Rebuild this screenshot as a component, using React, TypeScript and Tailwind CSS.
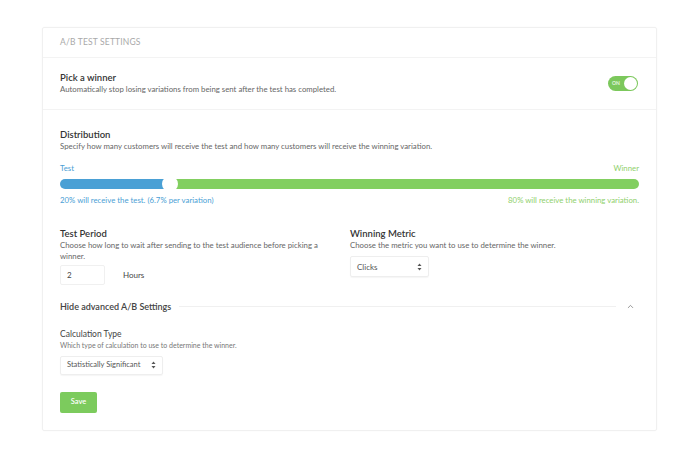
import { ChevronUp } from "lucide-react"

function SelectArrows() {
  return (
    <svg width="5" height="8" viewBox="0 0 5 8" className="text-[#555]">
      <path d="M2.5 0.5 L4.5 3 H0.5 Z" fill="currentColor" />
      <path d="M2.5 7.5 L4.5 5 H0.5 Z" fill="currentColor" />
    </svg>
  )
}

export default function App() {
  return (
    <div className="w-[700px] h-[460px] bg-white pt-[27px] pl-[42px] font-['Lato',sans-serif] text-[#333]">
      <div className="w-[615px] h-[404px] border border-[#f0f0f0] rounded-[2px] shadow-[0_0_2px_rgba(0,0,0,0.03)]">
        {/* header */}
        <div className="h-[30px] flex items-center px-[17px] border-b border-[#f3f3f3]">
          <span className="text-[8.5px] uppercase tracking-[0.02em] text-[#a9a9a9]">A/B Test Settings</span>
        </div>

        {/* pick a winner */}
        <div className="h-[52px] flex items-center justify-between px-[17px] border-b border-[#f3f3f3]">
          <div className="flex flex-col">
            <span className="text-[9.5px] font-semibold text-[#333] leading-[12px]">Pick a winner</span>
            <span className="text-[7.8px] text-[#666] leading-[11px]">
              Automatically stop losing variations from being sent after the test has completed.
            </span>
          </div>
          <div className="w-[30px] h-[15px] rounded-full bg-[#7cc85c] flex items-center justify-between pl-[4px] pr-[1px] mr-[1px]">
            <span className="text-[5px] text-white/80 font-bold">ON</span>
            <div className="w-[13px] h-[13px] rounded-full bg-white" />
          </div>
        </div>

        {/* distribution */}
        <div className="px-[17px] pt-[19px]">
          <div className="text-[9.5px] font-semibold leading-[12px]">Distribution</div>
          <div className="text-[7.8px] text-[#666] leading-[11px]">
            Specify how many customers will receive the test and how many customers will receive the winning variation.
          </div>
          <div className="flex justify-between mt-[11px] text-[7.8px] leading-[10px]">
            <span className="text-[#4aa0d5]">Test</span>
            <span className="text-[#8fd06c]">Winner</span>
          </div>
          <div className="relative mt-[6px] h-[10px] flex">
            <div className="w-[108px] h-full bg-[#4aa0d5] rounded-l-full" />
            <div className="flex-1 h-full bg-[#82cf60] rounded-r-full" />
            <div className="absolute left-[102px] top-[-3px] w-[16px] h-[16px] rounded-full bg-white" />
          </div>
          <div className="flex justify-between mt-[6px] text-[7.8px] leading-[10px]">
            <span className="text-[#4aa0d5]">20% will receive the test. (6.7% per variation)</span>
            <span className="text-[#8fd06c]">80% will receive the winning variation.</span>
          </div>
        </div>

        {/* test period / winning metric */}
        <div className="px-[17px] pt-[23px] grid grid-cols-[290px_1fr]">
          <div>
            <div className="text-[9.5px] font-semibold leading-[12px]">Test Period</div>
            <div className="text-[7.8px] text-[#666] leading-[11px] w-[268px]">
              Choose how long to wait after sending to the test audience before picking a winner.
            </div>
            <div className="flex items-center mt-[3px]">
              <div className="w-[45px] h-[20px] border border-[#f0f0f0] rounded-[2px] flex items-center px-[6px] text-[8px] text-[#444]">2</div>
              <span className="ml-[18px] text-[8px] text-[#444]">Hours</span>
            </div>
          </div>
          <div>
            <div className="text-[9.5px] font-semibold leading-[12px]">Winning Metric</div>
            <div className="text-[7.8px] text-[#666] leading-[11px]">
              Choose the metric you want to use to determine the winner.
            </div>
            <div className="mt-[5px] w-[79px] h-[21px] border border-[#eee] rounded-[2px] flex items-center justify-between px-[6px] shadow-[0_1px_1px_rgba(0,0,0,0.04)]">
              <span className="text-[8px] text-[#555]">Clicks</span>
              <SelectArrows />
            </div>
          </div>
        </div>

        {/* advanced toggle */}
        <div className="px-[17px] mt-[15px] flex items-center">
          <span className="text-[9px] font-semibold text-[#444]">Hide advanced A/B Settings</span>
          <div className="flex-1 h-px bg-[#f0f0f0] ml-[8px] mr-[10px]" />
          <ChevronUp className="w-[9px] h-[9px] text-[#777] mr-[4px]" strokeWidth={2} />
        </div>

        {/* calculation type */}
        <div className="px-[17px] pt-[15px]">
          <div className="text-[8.5px] text-[#444] leading-[11px]">Calculation Type</div>
          <div className="text-[7px] text-[#777] leading-[10px]">Which type of calculation to use to determine the winner.</div>
          <div className="mt-[6px] w-[103px] h-[19px] border border-[#eee] rounded-[2px] flex items-center justify-between px-[6px] shadow-[0_1px_1px_rgba(0,0,0,0.04)]">
            <span className="text-[7.5px] text-[#555]">Statistically Significant</span>
            <SelectArrows />
          </div>
          <button className="mt-[17px] w-[37px] h-[21px] rounded-[2px] bg-[#7ccb5d] text-white text-[7.5px] font-semibold">
            Save
          </button>
        </div>
      </div>
    </div>
  )
}
